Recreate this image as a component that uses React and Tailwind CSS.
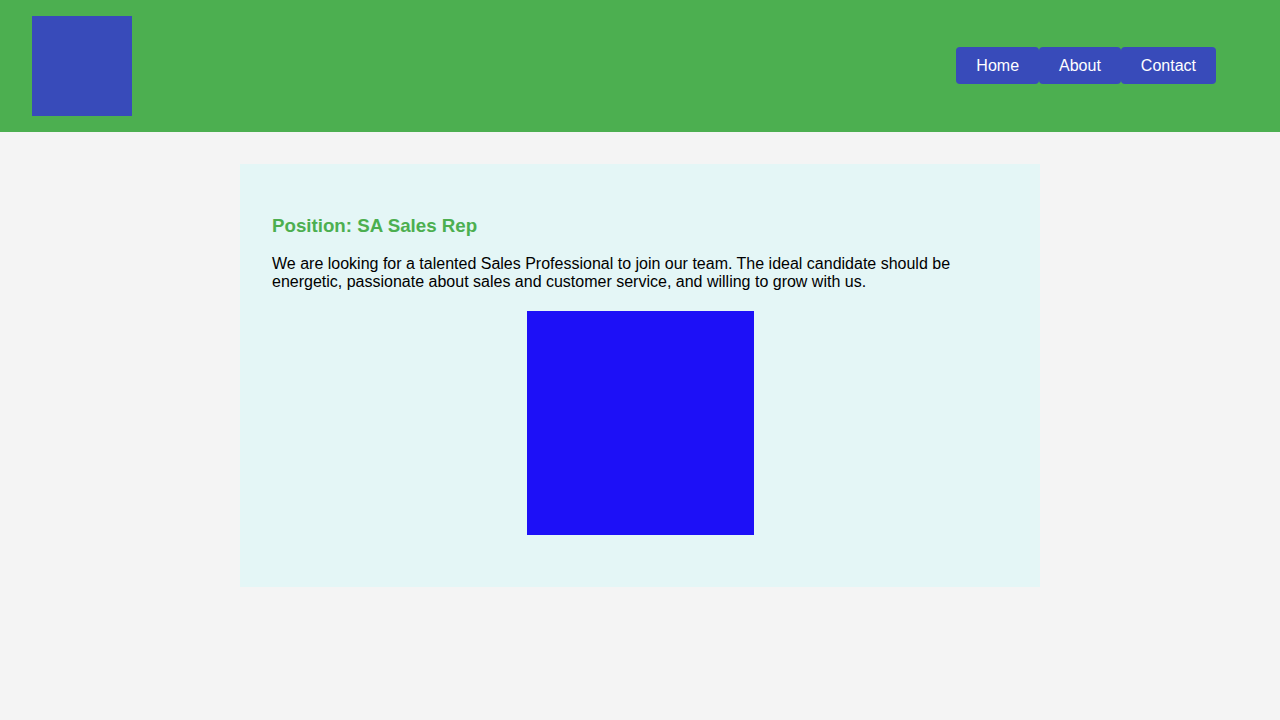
export default function App() {
  const links = ['Home', 'About', 'Contact']

  return (
    <div className="min-h-[720px] bg-[#f4f4f4] font-['Liberation_Sans',Arial,sans-serif] text-black">
      <header className="flex items-center justify-between bg-[#4caf50] px-8 py-4">
        <div className="h-[100px] w-[100px] bg-[#384bba]" />
        <nav className="mb-px mr-8 flex">
          {links.map((l) => (
            <button
              key={l}
              type="button"
              className="h-[37px] rounded-[4px] bg-[#384bba] px-5 text-base leading-[18px] text-white"
            >
              {l}
            </button>
          ))}
        </nav>
      </header>

      <main className="flex justify-center pt-8">
        <div className="w-[800px] bg-[#e4f6f6] p-8">
          <h3 className="mt-[19px] text-[18.72px] font-bold leading-[21px] text-[#4caf50]">
            Position: SA Sales Rep
          </h3>
          <p className="mt-[19px] text-base leading-[18px]">
            We are looking for a talented Sales Professional to join our team. The ideal candidate should be energetic,
            passionate about sales and customer service, and willing to grow with us.
          </p>
          <div className="mb-5 mt-5 flex justify-center">
            <div className="h-[224px] w-[227px] bg-[#1d10f7]" />
          </div>
        </div>
      </main>
    </div>
  )
}
